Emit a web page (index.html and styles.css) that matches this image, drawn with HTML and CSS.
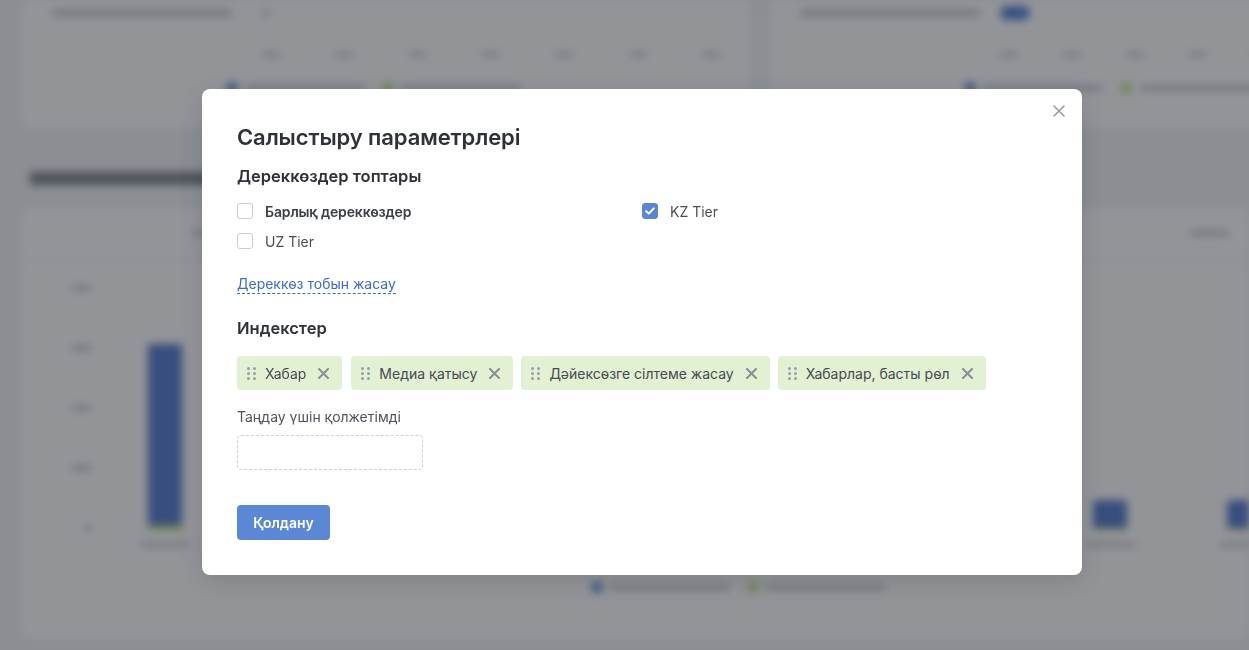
FILE: index.html
```html
<!DOCTYPE html>
<html lang="kk">
<head>
<meta charset="utf-8">
<title>Салыстыру параметрлері</title>
<link rel="stylesheet" href="styles.css">
</head>
<body>
<div class="dash" aria-hidden="true">
  <div class="top-row">
    <div class="card top-card">
      <div class="card-head">
        <span class="ph ph-title"></span>
        <span class="ph ph-select"></span>
      </div>
      <div class="axis">
        <span class="ph tick"></span><span class="ph tick"></span><span class="ph tick"></span><span class="ph tick"></span><span class="ph tick"></span><span class="ph tick"></span><span class="ph tick"></span>
      </div>
      <div class="legend">
        <span class="dot blue"></span><span class="ph leg"></span>
        <span class="dot green"></span><span class="ph leg"></span>
      </div>
    </div>
    <div class="card top-card right">
      <div class="card-head">
        <span class="ph ph-title"></span>
        <span class="toggle"></span>
      </div>
      <div class="axis">
        <span class="ph tick"></span><span class="ph tick"></span><span class="ph tick"></span><span class="ph tick"></span><span class="ph tick"></span>
      </div>
      <div class="legend">
        <span class="dot blue"></span><span class="ph leg"></span>
        <span class="dot green"></span><span class="ph leg"></span>
      </div>
    </div>
  </div>
  <div class="section-title"><span class="ph sec-ph"></span></div>
  <div class="card big-card">
    <div class="big-head">
      <span class="ph col-h"></span>
      <span class="ph col-h"></span>
    </div>
    <div class="chart">
      <div class="yaxis">
        <span class="ph ytick"></span><span class="ph ytick"></span><span class="ph ytick"></span><span class="ph ytick"></span><span class="ph ytick small"></span>
      </div>
      <div class="bars">
        <div class="bar-col"><div class="bar tall"></div><span class="ph xlab"></span></div>
        <div class="spacer"></div>
        <div class="bar-col"><div class="bar short"></div><span class="ph xlab"></span></div>
        <div class="bar-col"><div class="bar short"></div><span class="ph xlab"></span></div>
      </div>
    </div>
    <div class="legend center">
      <span class="dot blue"></span><span class="ph leg"></span>
      <span class="dot green"></span><span class="ph leg"></span>
    </div>
  </div>
</div>

<div class="overlay">
  <div class="modal">
    <button class="close" aria-label="Жабу">
      <svg width="12" height="12" viewBox="0 0 12 12"><path d="M1 1L11 11M11 1L1 11" stroke="#9a9ca4" stroke-width="1.6" stroke-linecap="round"/></svg>
    </button>
    <h1 class="title">Салыстыру параметрлері</h1>
    <h3 class="subtitle">Дереккөздер топтары</h3>
    <div class="checks">
      <label class="check"><span class="box"></span><span class="check-label strong">Барлық дереккөздер</span></label>
      <label class="check"><span class="box checked"><svg width="10" height="8" viewBox="0 0 10 8"><path d="M1.2 4.2L3.8 6.6L8.8 1.4" fill="none" stroke="#fff" stroke-width="2" stroke-linecap="round" stroke-linejoin="round"/></svg></span><span class="check-label">KZ Tier</span></label>
      <label class="check"><span class="box"></span><span class="check-label">UZ Tier</span></label>
    </div>
    <a class="create-link" href="#">Дереккөз тобын жасау</a>
    <h3 class="subtitle indexes">Индекстер</h3>
    <div class="chips">
      <div class="chip"><span class="handle"><i></i><i></i><i></i><i></i><i></i><i></i></span><span class="chip-text">Хабар</span><svg class="chip-x" width="11" height="11" viewBox="0 0 11 11"><path d="M1 1L10 10M10 1L1 10" stroke="#8b8e95" stroke-width="2" stroke-linecap="round"/></svg></div>
      <div class="chip"><span class="handle"><i></i><i></i><i></i><i></i><i></i><i></i></span><span class="chip-text">Медиа қатысу</span><svg class="chip-x" width="11" height="11" viewBox="0 0 11 11"><path d="M1 1L10 10M10 1L1 10" stroke="#8b8e95" stroke-width="2" stroke-linecap="round"/></svg></div>
      <div class="chip"><span class="handle"><i></i><i></i><i></i><i></i><i></i><i></i></span><span class="chip-text">Дәйексөзге сілтеме жасау</span><svg class="chip-x" width="11" height="11" viewBox="0 0 11 11"><path d="M1 1L10 10M10 1L1 10" stroke="#8b8e95" stroke-width="2" stroke-linecap="round"/></svg></div>
      <div class="chip"><span class="handle"><i></i><i></i><i></i><i></i><i></i><i></i></span><span class="chip-text">Хабарлар, басты рөл</span><svg class="chip-x" width="11" height="11" viewBox="0 0 11 11"><path d="M1 1L10 10M10 1L1 10" stroke="#8b8e95" stroke-width="2" stroke-linecap="round"/></svg></div>
    </div>
    <div class="avail-label">Таңдау үшін қолжетімді</div>
    <div class="dropzone"></div>
    <button class="apply">Қолдану</button>
  </div>
</div>
</body>
</html>
```

FILE: styles.css
```css
* { box-sizing: border-box; }
html, body { margin: 0; padding: 0; height: 100%; overflow: hidden; }
body {
  font-family: Inter, "Noto Sans", "Liberation Sans", sans-serif;
  background: #f1f2f4;
  color: #2f3339;
}

/* ---------- blurred dashboard behind ---------- */
.dash {
  filter: blur(4px);
  padding: 0 0 0 22px;
}
.top-row {
  display: flex;
  gap: 20px;
  height: 128px;
}
.card {
  background: #fff;
}
.top-card {
  flex: 0 0 728px;
  padding: 4px 30px 0 30px;
  display: flex;
  flex-direction: column;
}
.top-card.right { flex: 1; }
.card-head {
  display: flex;
  align-items: center;
  gap: 20px;
  height: 18px;
}
.ph {
  display: inline-block;
  background: #c4c6cb;
  border-radius: 3px;
  height: 6px;
}
.ph-title { width: 180px; background: #b8babf; }
.ph-select { width: 8px; margin-left: 10px; }
.toggle { width: 30px; height: 14px; border-radius: 7px; background: #4a78d0; }
.axis {
  display: flex;
  justify-content: space-between;
  padding: 0 0 0 210px;
  margin-top: 30px;
}
.right .axis { padding-left: 200px; }
.tick { width: 18px; height: 5px; }
.legend {
  display: flex;
  align-items: center;
  gap: 8px;
  margin-top: 26px;
  padding-left: 175px;
}
.right .legend { padding-left: 165px; }
.dot { width: 10px; height: 10px; border-radius: 2px; }
.dot.blue { background: #4f7cd0; }
.dot.green { background: #b9dc7a; }
.leg { width: 120px; margin-right: 10px; }

.section-title {
  margin: 38px 0 18px 8px;
  height: 24px;
  display: flex;
  align-items: center;
}
.sec-ph { width: 250px; height: 13px; background: #757981; }
.big-card {
  height: 430px;
  overflow: hidden;
}
.big-head {
  display: flex;
  justify-content: space-between;
  padding: 22px 20px 0 170px;
  height: 52px;
  border-bottom: 1px solid #e7e8eb;
}
.col-h { width: 40px; }
.chart {
  display: flex;
  padding-top: 25px;
}
.yaxis {
  flex: none;
  width: 70px;
  display: flex;
  flex-direction: column;
  align-items: flex-end;
  gap: 54px;
}
.ytick { width: 20px; }
.ytick.small { width: 8px; }
.bars {
  flex: none;
  display: flex;
  align-items: flex-end;
  height: 262px;
  padding-left: 55px;
}
.bar-col {
  flex: none;
  display: flex;
  flex-direction: column;
  align-items: center;
  gap: 12px;
  width: 36px;
}
.bar {
  width: 34px;
  background: #4a72c8;
  border-bottom: 5px solid #b5d86c;
  border-radius: 2px 2px 0 0;
}
.bar.tall { height: 186px; }
.bar.short { height: 30px; border-bottom-width: 2px; border-radius: 4px; }
.xlab { width: 50px; height: 5px; }
.spacer { flex: none; width: 909px; }
.bar-col + .bar-col { margin-left: 98px; }
.legend.center { padding-left: 570px; margin-top: 35px; }

/* ---------- overlay & modal ---------- */
.overlay {
  position: fixed;
  inset: 0;
  background: rgba(38, 42, 50, 0.5);
  padding: 89px 0 0 202px;
}
.modal {
  position: relative;
  width: 880px;
  background: #fff;
  border-radius: 8px;
  padding: 31px 35px 35px 35px;
  box-shadow: 0 6px 24px rgba(0, 0, 0, 0.12);
}
.close {
  position: absolute;
  top: 12px;
  right: 13px;
  width: 20px;
  height: 20px;
  border: 0;
  background: none;
  padding: 4px;
  display: flex;
  align-items: center;
  justify-content: center;
  cursor: pointer;
}
.title {
  margin: 0;
  font-size: 22px;
  line-height: 34px;
  font-weight: 600;
  color: #2e3238;
  letter-spacing: -0.1px;
}
.subtitle {
  margin: 10px 0 0 0;
  font-size: 16.5px;
  line-height: 24px;
  font-weight: 600;
  color: #2e3238;
}
.checks {
  display: grid;
  grid-template-columns: 405px 1fr;
  row-gap: 10px;
  margin-top: 13px;
}
.check {
  display: flex;
  align-items: center;
  gap: 12px;
  height: 20px;
  font-size: 14px;
  color: #4a4e55;
}
.box {
  width: 16px;
  height: 16px;
  border: 1px solid #c9ccd1;
  border-radius: 3px;
  background: #fff;
  display: flex;
  align-items: center;
  justify-content: center;
  flex: none;
}
.box.checked {
  background: #5a86d3;
  border-color: #5a86d3;
}
.check-label.strong { font-weight: 600; color: #3c4047; letter-spacing: -0.15px; }
.create-link {
  display: inline-block;
  margin-top: 24px;
  font-size: 14px;
  line-height: 18px;
  color: #3d6cc2;
  text-decoration: none;
  border-bottom: 1px dashed #3d6cc2;
}
.subtitle.indexes { margin-top: 22px; }
.chips {
  display: flex;
  flex-wrap: wrap;
  gap: 9px 8px;
  margin-top: 16px;
}
.chip {
  display: flex;
  align-items: center;
  height: 34px;
  padding: 0 13px 0 10px;
  background: #e2f0d3;
  border-radius: 4px;
  font-size: 14px;
  color: #464a51;
}
.handle {
  display: grid;
  grid-template-columns: 3px 3px;
  gap: 2px 3px;
  margin-right: 9px;
}
.handle i {
  display: block;
  width: 3px;
  height: 3px;
  border-radius: 50%;
  background: #9a9da5;
}
.chip-x { margin-left: 12px; }
.chip:first-child { margin-right: 1px; }
.avail-label {
  margin-top: 17px;
  font-size: 14px;
  line-height: 20px;
  color: #4f535a;
}
.dropzone {
  margin-top: 8px;
  width: 186px;
  height: 35px;
  border: 1px dashed #cdd0d5;
  border-radius: 4px;
}
.apply {
  display: block;
  margin-top: 35px;
  height: 35px;
  width: 93px;
  border: 0;
  border-radius: 4px;
  background: #5b87d4;
  color: #fff;
  font-family: inherit;
  font-size: 14px;
  font-weight: 600;
  cursor: pointer;
}
```
